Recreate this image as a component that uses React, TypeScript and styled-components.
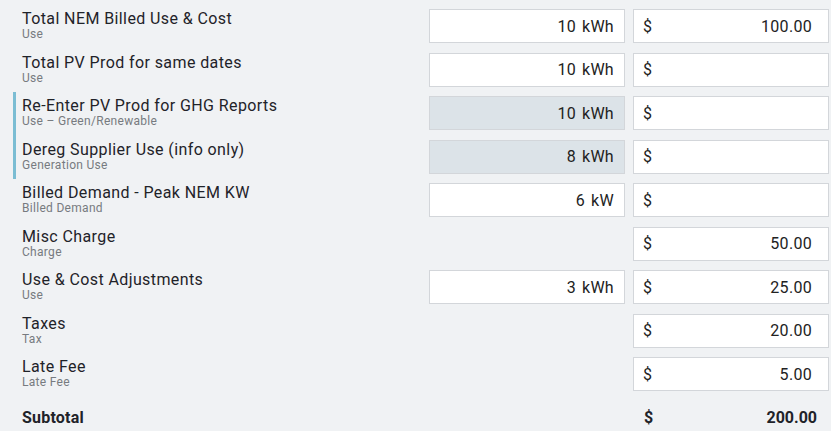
import React from "react";
import styled, { createGlobalStyle } from "styled-components";

const GlobalStyle = createGlobalStyle`
  html, body {
    margin: 0;
    padding: 0;
    background: #f0f2f4;
  }
  body {
    font-family: Roboto, "Liberation Sans", Arial, sans-serif;
    color: #1f2329;
  }
`;

const Page = styled.div`
  width: 831px;
  height: 431px;
  box-sizing: border-box;
  padding: 4.5px 2px 0 13px;
  background: #f0f2f4;
  overflow: hidden;
`;

const Row = styled.div<{ $highlight?: boolean }>`
  display: grid;
  grid-template-columns: 1fr 196px 196px;
  column-gap: 8px;
  align-items: start;
  box-sizing: border-box;
  height: 43.5px;
  padding: 4.75px 0 4.75px 6px;
  border-left: 3px solid ${(p) => (p.$highlight ? "#7bbdd3" : "transparent")};
`;

const Label = styled.div`
  display: flex;
  flex-direction: column;
`;

const Title = styled.div<{ $bold?: boolean }>`
  font-size: 16px;
  line-height: 19px;
  letter-spacing: 0.4px;
  font-weight: ${(p) => (p.$bold ? 700 : 400)};
  color: #1f2329;
`;

const TotalTitle = styled(Title)`
  line-height: 34px;
  letter-spacing: 0.2px;
`;

const Subtitle = styled.div`
  font-size: 12px;
  line-height: 13px;
  letter-spacing: 0.3px;
  color: #777b80;
`;

const Field = styled.div<{ $readOnly?: boolean }>`
  box-sizing: border-box;
  height: 34px;
  display: flex;
  align-items: center;
  border: 1px solid #d3d6da;
  background: ${(p) => (p.$readOnly ? "#dce3e8" : "#ffffff")};
  font-size: 16px;
  letter-spacing: 0.3px;
  color: #222;
`;

const UnitField = styled(Field)`
  justify-content: flex-end;
  gap: 6px;
  padding-right: 10px;
`;

const MoneyField = styled(Field)`
  justify-content: space-between;
  padding: 0 16px 0 9px;
`;

const Empty = styled.div``;

const Total = styled.div`
  height: 34px;
  display: flex;
  align-items: center;
  justify-content: space-between;
  padding: 0 12px 0 11px;
  font-size: 16px;
  font-weight: 700;
  color: #1f2329;
`;

type Line = {
  title: string;
  sub: string;
  qty?: string;
  unit?: string;
  readOnly?: boolean;
  highlight?: boolean;
  money?: string;
};

const lines: Line[] = [
  { title: "Total NEM Billed Use & Cost", sub: "Use", qty: "10", unit: "kWh", money: "100.00" },
  { title: "Total PV Prod for same dates", sub: "Use", qty: "10", unit: "kWh", money: "" },
  { title: "Re-Enter PV Prod for GHG Reports", sub: "Use \u2013 Green/Renewable", qty: "10", unit: "kWh", readOnly: true, highlight: true, money: "" },
  { title: "Dereg Supplier Use (info only)", sub: "Generation Use", qty: "8", unit: "kWh", readOnly: true, highlight: true, money: "" },
  { title: "Billed Demand - Peak NEM KW", sub: "Billed Demand", qty: "6", unit: "kW", money: "" },
  { title: "Misc Charge", sub: "Charge", money: "50.00" },
  { title: "Use & Cost Adjustments", sub: "Use", qty: "3", unit: "kWh", money: "25.00" },
  { title: "Taxes", sub: "Tax", money: "20.00" },
  { title: "Late Fee", sub: "Late Fee", money: "5.00" },
];

export default function App() {
  return (
    <>
      <GlobalStyle />
      <Page>
        {lines.map((l) => (
          <Row key={l.title} $highlight={l.highlight}>
            <Label>
              <Title>{l.title}</Title>
              <Subtitle>{l.sub}</Subtitle>
            </Label>
            {l.unit ? (
              <UnitField $readOnly={l.readOnly}>
                <span>{l.qty}</span>
                <span>{l.unit}</span>
              </UnitField>
            ) : (
              <Empty />
            )}
            <MoneyField>
              <span>$</span>
              <span>{l.money}</span>
            </MoneyField>
          </Row>
        ))}
        <Row>
          <Label>
            <TotalTitle $bold>Subtotal</TotalTitle>
          </Label>
          <Empty />
          <Total>
            <span>$</span>
            <span>200.00</span>
          </Total>
        </Row>
      </Page>
    </>
  );
}
